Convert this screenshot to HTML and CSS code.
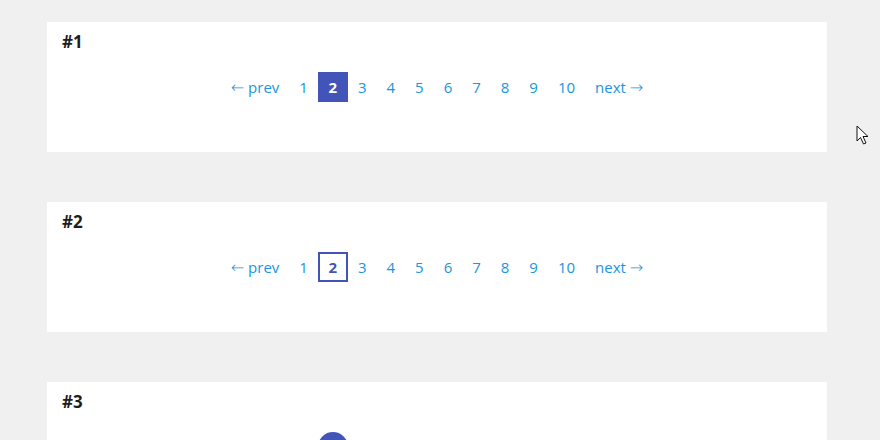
FILE: index.html
```html
<!DOCTYPE html>
<html>
<head>
<meta charset="utf-8">
<link rel="stylesheet" href="styles.css">
</head>
<body>
<div class="page">
  <section class="card">
    <h3 class="title">#1</h3>
    <nav class="pager">
      <a class="link"><span class="arrow">←</span> prev</a>
      <a class="link">1</a>
      <a class="link active-fill">2</a>
      <a class="link">3</a>
      <a class="link">4</a>
      <a class="link">5</a>
      <a class="link">6</a>
      <a class="link">7</a>
      <a class="link">8</a>
      <a class="link">9</a>
      <a class="link">10</a>
      <a class="link">next <span class="arrow">→</span></a>
    </nav>
  </section>
  <section class="card">
    <h3 class="title">#2</h3>
    <nav class="pager">
      <a class="link"><span class="arrow">←</span> prev</a>
      <a class="link">1</a>
      <a class="link active-outline">2</a>
      <a class="link">3</a>
      <a class="link">4</a>
      <a class="link">5</a>
      <a class="link">6</a>
      <a class="link">7</a>
      <a class="link">8</a>
      <a class="link">9</a>
      <a class="link">10</a>
      <a class="link">next <span class="arrow">→</span></a>
    </nav>
  </section>
  <section class="card">
    <h3 class="title">#3</h3>
    <nav class="pager">
      <a class="link"><span class="arrow">←</span> prev</a>
      <a class="link">1</a>
      <a class="link active-circle">2</a>
      <a class="link">3</a>
      <a class="link">4</a>
      <a class="link">5</a>
      <a class="link">6</a>
      <a class="link">7</a>
      <a class="link">8</a>
      <a class="link">9</a>
      <a class="link">10</a>
      <a class="link">next <span class="arrow">→</span></a>
    </nav>
  </section>
</div>
<svg class="cursor" width="14" height="22" viewBox="0 0 14 22">
  <path d="M1 1 L1 16 L4.5 12.5 L7.5 19 L10 18 L7 11.5 L12 11.5 Z" fill="#fff" stroke="#111" stroke-width="1" stroke-linejoin="miter"/>
</svg>
</body>
</html>
```

FILE: styles.css
```css
html, body {
  margin: 0;
  padding: 0;
  background: #f0f0f0;
  overflow: hidden;
}
body {
  width: 880px;
  height: 440px;
  position: relative;
  font-family: "Open Sans", "Noto Sans", sans-serif;
}
.page {
  display: flex;
  flex-direction: column;
  gap: 50px;
  padding: 22px 0 0 47px;
}
.card {
  width: 780px;
  height: 130px;
  box-sizing: border-box;
  background: #fff;
  padding: 9px 15px 0 15px;
  flex-shrink: 0;
}
.title {
  margin: 0;
  font-size: 17px;
  line-height: 22px;
  font-weight: 700;
  color: #1e1e1e;
}
.pager {
  display: flex;
  justify-content: center;
  margin-top: 19px;
  height: 30px;
}
.link {
  display: block;
  padding: 0 10px;
  height: 30px;
  line-height: 30px;
  font-size: 15px;
  color: #1a95e0;
  cursor: pointer;
  white-space: nowrap;
}
.arrow {
  font-family: "DejaVu Sans", sans-serif;
  font-size: 16px;
  font-weight: 300;
  line-height: 1;
}
.active-fill,
.active-outline,
.active-circle {
  width: 30px;
  padding: 0;
  text-align: center;
  box-sizing: border-box;
  font-weight: 700;
}
.active-fill {
  background: #4354b9;
  color: #fff;
}
.active-outline {
  border: 2px solid #4354b9;
  line-height: 26px;
  color: #4354b9;
}
.active-circle {
  background: #4354b9;
  color: #fff;
  border-radius: 50%;
}
.cursor {
  position: absolute;
  left: 856px;
  top: 125px;
}
```
